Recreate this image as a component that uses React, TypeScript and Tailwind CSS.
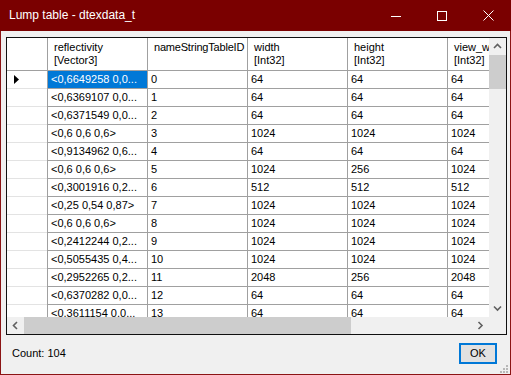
import React from "react";

const rows: string[][] = [
  ["<0,6649258 0,0...", "0", "64", "64", "64"],
  ["<0,6369107 0,0...", "1", "64", "64", "64"],
  ["<0,6371549 0,0...", "2", "64", "64", "64"],
  ["<0,6 0,6 0,6>", "3", "1024", "1024", "1024"],
  ["<0,9134962 0,6...", "4", "64", "64", "64"],
  ["<0,6 0,6 0,6>", "5", "1024", "256", "1024"],
  ["<0,3001916 0,2...", "6", "512", "512", "512"],
  ["<0,25 0,54 0,87>", "7", "1024", "1024", "1024"],
  ["<0,6 0,6 0,6>", "8", "1024", "1024", "1024"],
  ["<0,2412244 0,2...", "9", "1024", "1024", "1024"],
  ["<0,5055435 0,4...", "10", "1024", "1024", "1024"],
  ["<0,2952265 0,2...", "11", "2048", "256", "2048"],
  ["<0,6370282 0,0...", "12", "64", "64", "64"],
  ["<0,3611154 0,0...", "13", "64", "64", "64"],
];

const headers: string[][] = [
  ["reflectivity", "[Vector3]"],
  ["nameStringTableID"],
  ["width", "[Int32]"],
  ["height", "[Int32]"],
  ["view_w", "[Int32]"],
];

function Chevron({ dir }: { dir: "up" | "down" | "left" | "right" }) {
  const d =
    dir === "up"
      ? "M1 5 L4.5 1.5 L8 5"
      : dir === "down"
      ? "M1 1.5 L4.5 5 L8 1.5"
      : dir === "left"
      ? "M5 1 L1.5 4.5 L5 8"
      : "M1.5 1 L5 4.5 L1.5 8";
  const w = dir === "up" || dir === "down" ? 9 : 7;
  const h = dir === "up" || dir === "down" ? 7 : 9;
  return (
    <svg width={w} height={h} viewBox={`0 0 ${w} ${h}`}>
      <path d={d} fill="none" stroke="#606060" strokeWidth="1.6" />
    </svg>
  );
}

export default function App() {
  return (
    <div className="w-[511px] h-[375px] flex flex-col bg-[#8b1414] font-['Liberation_Sans',Arial,sans-serif] text-black overflow-hidden">
      {/* Title bar */}
      <div className="h-[31px] shrink-0 flex items-center bg-[#7a0000] text-white">
        <div className="pl-[9px] text-[12px] leading-none pb-[1px]">Lump table - dtexdata_t</div>
        <div className="ml-auto flex h-full">
          <div className="w-[46px] h-full flex items-center justify-center">
            <svg width="10" height="10" viewBox="0 0 10 10">
              <path d="M0 5.5 H10" stroke="white" strokeWidth="1" />
            </svg>
          </div>
          <div className="w-[46px] h-full flex items-center justify-center">
            <svg width="10" height="10" viewBox="0 0 10 10">
              <rect x="0.5" y="0.5" width="9" height="9" fill="none" stroke="white" strokeWidth="1" />
            </svg>
          </div>
          <div className="w-[46px] h-full flex items-center justify-center">
            <svg width="11" height="11" viewBox="0 0 11 11">
              <path d="M0.5 0.5 L10.5 10.5 M10.5 0.5 L0.5 10.5" stroke="white" strokeWidth="1" />
            </svg>
          </div>
        </div>
      </div>

      {/* Body */}
      <div className="relative flex-1 mx-[1px] mb-[1px] bg-[#f0f0f0] flex flex-col">
        {/* Grid */}
        <div className="mt-[6px] ml-[5px] mr-[3px] h-[298px] border border-[#101010] bg-white flex flex-col text-[11px]">
          <div className="flex h-[279px]">
            <div className="w-[482px] h-[279px] overflow-hidden">
              {/* header */}
              <div className="flex h-[33px]">
                <div className="w-[41px] shrink-0 border-r border-b border-[#a0a0a0]" />
                {headers.map((h, i) => (
                  <div
                    key={i}
                    className={
                      i === 1
                        ? "w-[100px] shrink-0 border-r border-b border-[#a0a0a0] pl-[6px] pt-[3px] leading-[13px] whitespace-nowrap overflow-hidden tracking-[-0.2px]"
                        : "w-[100px] shrink-0 border-r border-b border-[#a0a0a0] pl-[6px] pt-[3px] leading-[13px] whitespace-nowrap overflow-hidden"
                    }
                  >
                    {h.map((l, j) => (
                      <div key={j}>{l}</div>
                    ))}
                  </div>
                ))}
              </div>
              {rows.map((r, ri) => (
                <div key={ri} className="flex h-[18px]">
                  <div className="w-[41px] shrink-0 border-r border-[#a0a0a0] relative">
                    <div className="h-full border-b border-[#e3e3e3] flex items-center pl-[7px]">
                      {ri === 0 && (
                        <svg width="5" height="9" viewBox="0 0 5 9">
                          <path d="M0 0 L5 4.5 L0 9 Z" fill="#000" />
                        </svg>
                      )}
                    </div>
                  </div>
                  {r.map((c, ci) => (
                    <div
                      key={ci}
                      className="w-[100px] shrink-0 border-r border-b border-[#a0a0a0] whitespace-pre overflow-hidden"
                    >
                      <div
                        className={
                          ri === 0 && ci === 0
                            ? "h-full bg-[#0078d7] text-white flex items-center pl-[3px]"
                            : "h-full flex items-center pl-[3px]"
                        }
                      >
                        {c}
                      </div>
                    </div>
                  ))}
                </div>
              ))}
            </div>
            {/* vertical scrollbar */}
            <div className="w-[17px] h-[279px] bg-[#f0f0f0] flex flex-col">
              <div className="h-[17px] flex items-center justify-center">
                <Chevron dir="up" />
              </div>
              <div className="h-[34px] bg-[#cdcdcd]" />
              <div className="flex-1" />
              <div className="h-[17px] flex items-center justify-center">
                <Chevron dir="down" />
              </div>
            </div>
          </div>
          <div className="flex h-[17px]">
            <div className="w-[482px] h-[17px] bg-[#f0f0f0] flex">
              <div className="w-[17px] flex items-center justify-center">
                <Chevron dir="left" />
              </div>
              <div className="w-[327px] bg-[#cdcdcd]" />
              <div className="flex-1" />
              <div className="w-[17px] flex items-center justify-center">
                <Chevron dir="right" />
              </div>
            </div>
            <div className="w-[17px] bg-[#f0f0f0]" />
          </div>
        </div>

        {/* bottom bar */}
        <div className="mt-[8px] h-[21px] flex items-center text-[11px]">
          <div className="pl-[11px]">Count: 104</div>
          <div className="ml-auto mr-[13px] w-[38px] h-[21px] border-2 border-[#0078d7] bg-[#e1e1e1] flex items-center justify-center">
            OK
          </div>
        </div>

        {/* resize grip */}
        <svg className="absolute right-[1px] bottom-[0px]" width="9" height="9" viewBox="0 0 9 9">
          <rect x="6" y="0" width="2" height="2" fill="#b8b8b8" />
          <rect x="3" y="3" width="2" height="2" fill="#b8b8b8" />
          <rect x="6" y="3" width="2" height="2" fill="#b8b8b8" />
          <rect x="0" y="6" width="2" height="2" fill="#b8b8b8" />
          <rect x="3" y="6" width="2" height="2" fill="#b8b8b8" />
          <rect x="6" y="6" width="2" height="2" fill="#b8b8b8" />
        </svg>
      </div>
    </div>
  );
}
